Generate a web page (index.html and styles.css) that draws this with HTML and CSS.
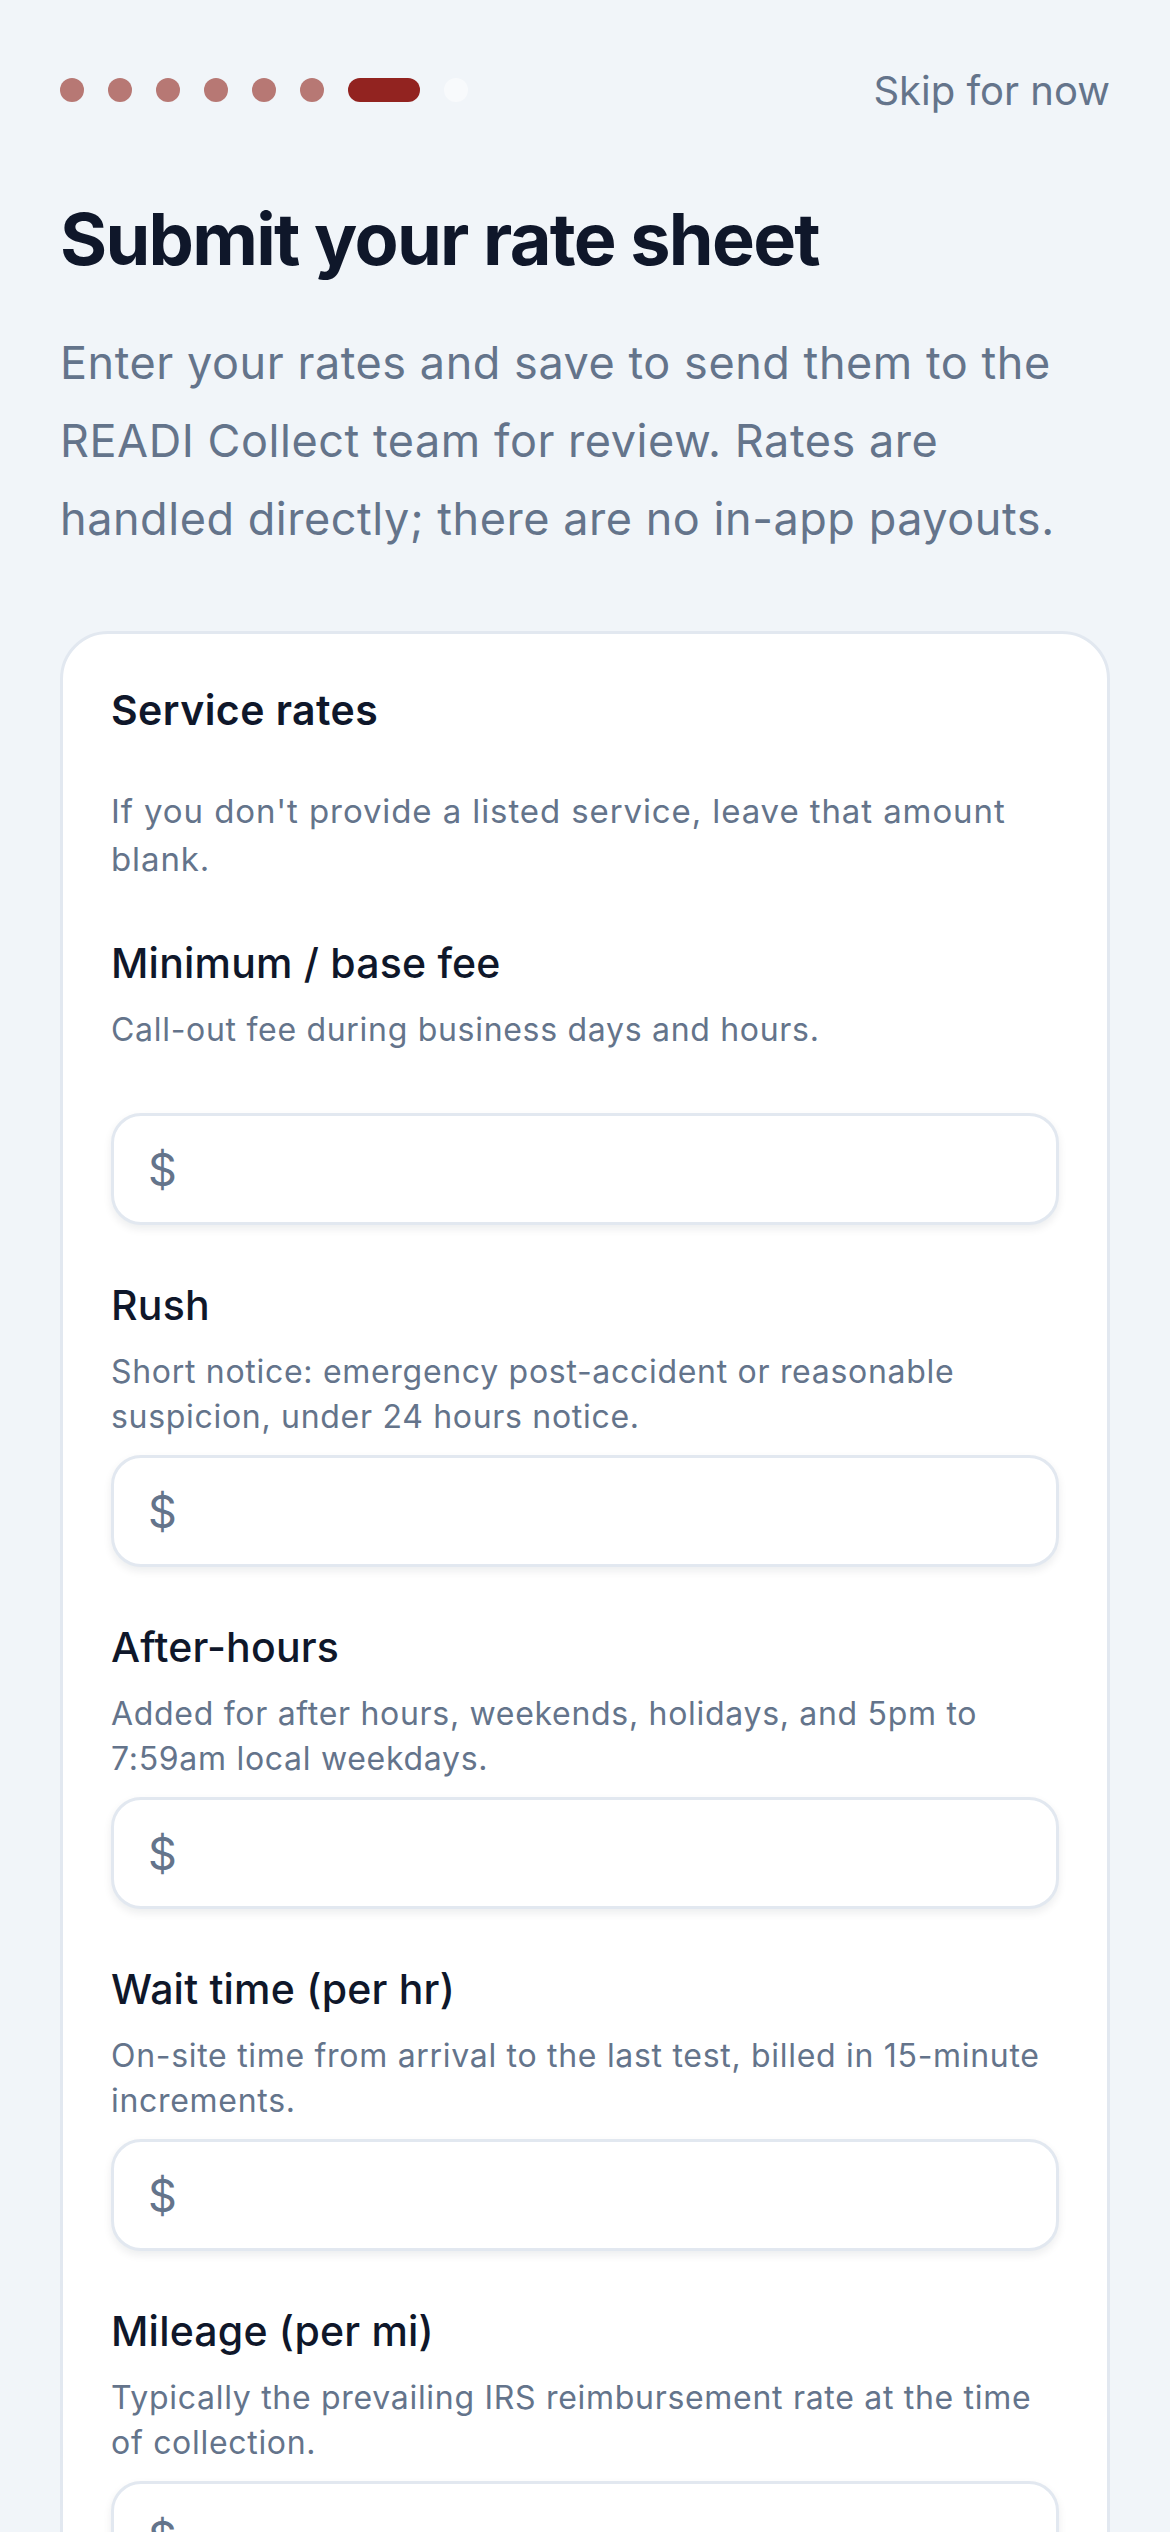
FILE: index.html
```html
<!DOCTYPE html>
<html lang="en">
<head>
    <meta charset="UTF-8">
    <meta name="viewport" content="width=device-width, initial-scale=1.0">
    <title>Submit your rate sheet</title>
    <link rel="stylesheet" href="styles.css">
</head>
<body>
    <div class="screen">
        <!-- progress + skip -->
        <div class="top-bar">
            <div class="steps">
                <span class="step done"></span>
                <span class="step done"></span>
                <span class="step done"></span>
                <span class="step done"></span>
                <span class="step done"></span>
                <span class="step done"></span>
                <span class="step current"></span>
                <span class="step"></span>
            </div>
            <a class="skip" href="#">Skip for now</a>
        </div>

        <h1>Submit your rate sheet</h1>
        <p class="intro">Enter your rates and save to send them to the READI Collect team for review. Rates are handled directly; there are no in-app payouts.</p>

        <div class="card">
            <h2>Service rates</h2>
            <p class="card-note">If you don't provide a listed service, leave that amount blank.</p>

            <div class="field">
                <div class="label">Minimum / base fee</div>
                <div class="hint">Call-out fee during business days and hours.</div>
                <label class="money"><span>$</span><input type="text" inputmode="decimal"></label>
            </div>

            <div class="field">
                <div class="label">Rush</div>
                <div class="hint">Short notice: emergency post-accident or reasonable suspicion, under 24 hours notice.</div>
                <label class="money"><span>$</span><input type="text" inputmode="decimal"></label>
            </div>

            <div class="field">
                <div class="label">After-hours</div>
                <div class="hint">Added for after hours, weekends, holidays, and 5pm to 7:59am local weekdays.</div>
                <label class="money"><span>$</span><input type="text" inputmode="decimal"></label>
            </div>

            <div class="field">
                <div class="label">Wait time (per hr)</div>
                <div class="hint">On-site time from arrival to the last test, billed in 15-minute increments.</div>
                <label class="money"><span>$</span><input type="text" inputmode="decimal"></label>
            </div>

            <div class="field">
                <div class="label">Mileage (per mi)</div>
                <div class="hint">Typically the prevailing IRS reimbursement rate at the time of collection.</div>
                <label class="money"><span>$</span><input type="text" inputmode="decimal"></label>
            </div>
        </div>
    </div>
</body>
</html>
```

FILE: styles.css
```css
body {
    margin: 0;
    background: #f1f5f9;
    font-family: Inter, "Noto Sans", sans-serif;
    color: #0f172a;
}
.screen {
    padding: 78px 60px 60px;
}
.top-bar {
    display: flex;
    align-items: center;
    justify-content: space-between;
    height: 24px;
}
.steps {
    display: flex;
    gap: 24px;
}
.step {
    width: 24px;
    height: 24px;
    border-radius: 12px;
    background: #f8fafc;
}
.step.done {
    background: #b77874;
}
.step.current {
    width: 72px;
    background: #922320;
}
.skip {
    font-size: 40px;
    color: #64748b;
    text-decoration: none;
    letter-spacing: 0;
}
h1 {
    margin: 94px 0 0;
    font-size: 72px;
    line-height: 86px;
    font-weight: 700;
    letter-spacing: -1.7px;
}
.intro {
    margin: 42px 0 0;
    font-size: 45px;
    line-height: 78px;
    color: #64748b;
    letter-spacing: 0.55px;
}
.card {
    margin-top: 73px;
    background: #fff;
    border: 3px solid #e2e8f0;
    border-radius: 48px;
    padding: 48px;
}
h2 {
    margin: 0;
    font-size: 41px;
    line-height: 56px;
    font-weight: 600;
    letter-spacing: 0.45px;
}
.card-note {
    margin: 49px 0 52px;
    font-size: 33px;
    line-height: 48px;
    color: #64748b;
    letter-spacing: 0.9px;
}
.field {
    display: flex;
    flex-direction: column;
    margin-bottom: 52px;
}
.label {
    font-size: 41px;
    line-height: 56px;
    font-weight: 500;
    letter-spacing: 0.2px;
}
.hint {
    margin-top: 16px;
    min-height: 90px;
    font-size: 32px;
    line-height: 45px;
    color: #64748b;
    letter-spacing: 0.7px;
}
.money {
    margin-top: 16px;
    display: flex;
    align-items: center;
    gap: 12px;
    height: 112px;
    box-sizing: border-box;
    padding: 0 34px;
    border: 3px solid #e2e8f0;
    border-radius: 30px;
    background: #fff;
    box-shadow: 0 4px 8px rgba(15, 23, 42, 0.08);
}
.money span {
    font-size: 45px;
    color: #64748b;
}
.money input {
    flex: 1;
    border: none;
    outline: none;
    background: transparent;
    font-family: inherit;
    font-size: 45px;
    color: #0f172a;
}
```
